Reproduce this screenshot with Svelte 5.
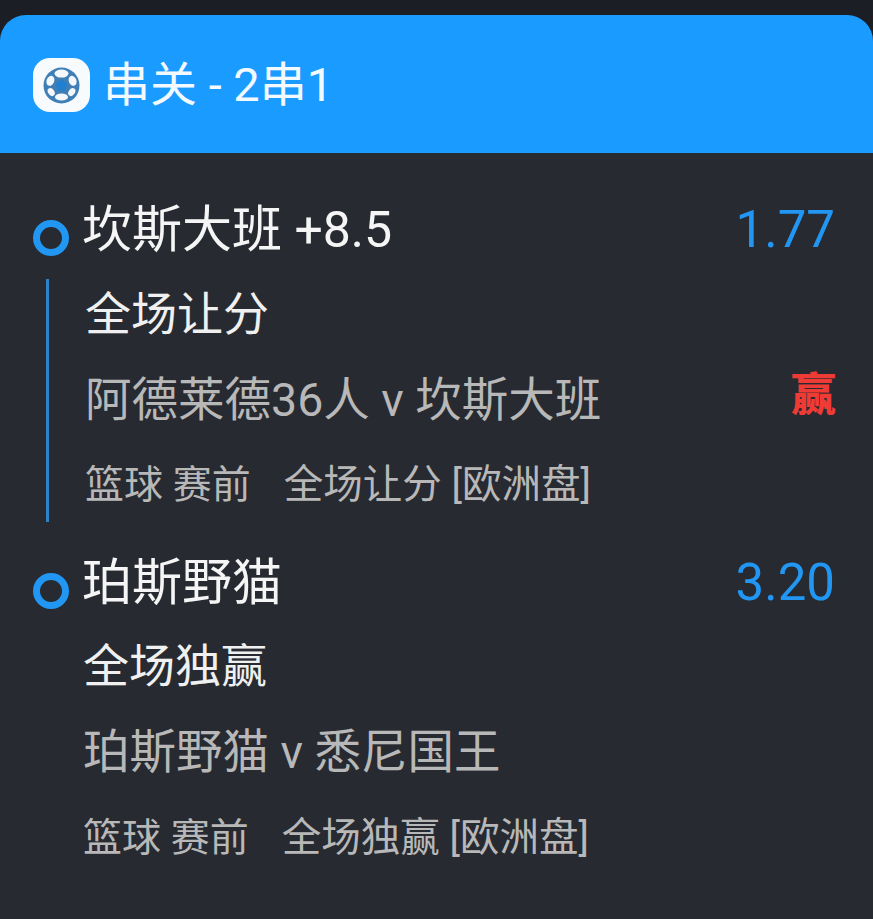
<script>
    const legs = [
        {
            team: "坎斯大班 +8.5",
            odds: "1.77",
            market: "全场让分",
            match: "阿德莱德36人 v 坎斯大班",
            info: "篮球 赛前",
            detail: "全场让分 [欧洲盘]",
            result: "赢"
        },
        {
            team: "珀斯野猫",
            odds: "3.20",
            market: "全场独赢",
            match: "珀斯野猫 v 悉尼国王",
            info: "篮球 赛前",
            detail: "全场独赢 [欧洲盘]",
            result: ""
        }
    ];
</script>

<div class="page">
    <div class="card">
        <header class="head">
            <span class="logo">
                <svg viewBox="0 0 36 36" width="37" height="37">
                    <circle cx="18" cy="18" r="17.5" fill="#3f7fb5" />
                    <path d="M18 12.4l5.4 3.9-2 6.4h-6.8l-2-6.4z" fill="#1f7fd0" />
                    <ellipse cx="18" cy="6.4" rx="6.8" ry="3.9" fill="#f4f8fb" />
                    <ellipse cx="7.2" cy="13.4" rx="3.7" ry="5" fill="#f4f8fb" transform="rotate(22 7.2 13.4)" />
                    <ellipse cx="28.8" cy="13.4" rx="3.7" ry="5" fill="#f4f8fb" transform="rotate(-22 28.8 13.4)" />
                    <ellipse cx="8" cy="24.4" rx="4.2" ry="3" fill="#f4f8fb" transform="rotate(55 8 24.4)" />
                    <ellipse cx="28" cy="24.4" rx="4.2" ry="3" fill="#f4f8fb" transform="rotate(-55 28 24.4)" />
                    <ellipse cx="18" cy="29.2" rx="6.4" ry="3.5" fill="#f4f8fb" />
                </svg>
            </span>
            <span class="head-title">串关 - 2串1</span>
        </header>

        <div class="legs">
            {#each legs as leg, i}
                <section class="leg" class:second={i === 1}>
                    <div class="top-row">
                        <span class="dot"></span>
                        <span class="team">{leg.team}</span>
                        <span class="odds">{leg.odds}</span>
                    </div>
                    <div class="body" class:line={i === 0}>
                        <div class="market">{leg.market}</div>
                        <div class="match-row">
                            <span class="match">{leg.match}</span>
                            {#if leg.result}
                                <span class="result">{leg.result}</span>
                            {/if}
                        </div>
                        <div class="info">
                            <span>{leg.info}</span>
                            <span class="detail">{leg.detail}</span>
                        </div>
                    </div>
                </section>
            {/each}
        </div>
    </div>
</div>

<style>
    :global(body) {
        margin: 0;
        background: #272a30;
    }

    .page {
        height: 919px;
        overflow: hidden;
        padding-top: 15px;
        box-sizing: border-box;
        background: linear-gradient(#1c1e26 0, #1c1e26 40px, #272a30 40px);
        font-family: "Roboto", "Noto Sans CJK SC", sans-serif;
    }

    .card {
        background: #272a30;
        border-radius: 26px 26px 0 0;
        height: 904px;
    }

    .head {
        height: 138px;
        box-sizing: border-box;
        padding: 2px 0 0 33px;
        background: #1a9bff;
        border-radius: 26px 26px 0 0;
        display: flex;
        align-items: center;
        gap: 13px;
    }

    .logo {
        width: 57px;
        height: 54px;
        background: #f7fbfe;
        border-radius: 17px;
        display: flex;
        align-items: center;
        justify-content: center;
    }

    .head-title {
        color: #f2f9ff;
        font-size: 47px;
        line-height: 54px;
    }

    .legs {
        padding: 48px 38px 0 33px;
    }

    .leg.second {
        margin-top: 32px;
    }

    .top-row {
        display: flex;
        align-items: center;
        height: 58px;
    }

    .dot {
        width: 36px;
        height: 36px;
        box-sizing: border-box;
        border: 7px solid #2196f3;
        border-radius: 50%;
        margin-top: 15px;
        margin-right: 13px;
        flex-shrink: 0;
    }

    .team {
        color: #f5f5f5;
        font-size: 50px;
        line-height: 58px;
        flex: 1;
    }

    .odds {
        color: #2196f3;
        font-size: 51px;
        line-height: 58px;
    }

    .body {
        margin: 20px 0 0 13px;
        padding: 8px 0 14px 36px;
        border-left: 3px solid transparent;
    }

    .second .body {
        margin-top: 0;
        padding: 27px 0 0 34px;
    }

    .body.line {
        border-left-color: #2f83c4;
    }

    .market {
        font-size: 46px;
        line-height: 54px;
        color: #f0f0f0;
    }

    .match-row {
        display: flex;
        justify-content: space-between;
        align-items: flex-start;
        margin-top: 32px;
    }

    .match {
        font-size: 46.5px;
        line-height: 54px;
        color: #b8b8b8;
    }

    .result {
        color: #ef3b36;
        font-size: 45px;
        font-weight: 900;
        line-height: 46px;
        margin-right: -1px;
    }

    .info {
        display: flex;
        gap: 33px;
        margin-top: 35px;
        font-size: 39px;
        line-height: 46px;
        color: #b8b8b8;
    }

    .detail {
        font-size: 39.5px;
    }

    .second .info {
        margin-top: 36px;
    }
</style>
